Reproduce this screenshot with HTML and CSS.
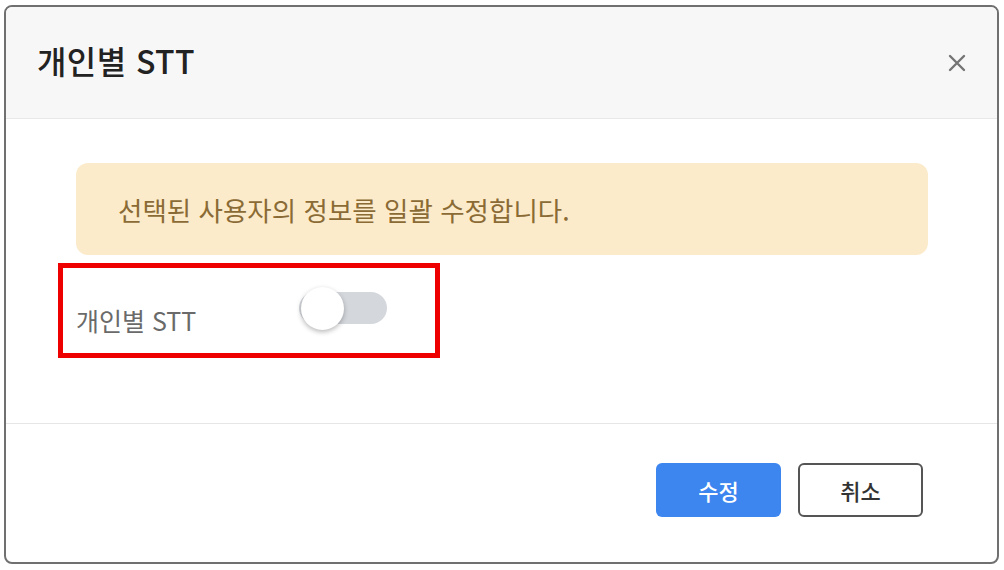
FILE: index.html
```html
<!DOCTYPE html>
<html lang="ko">
<head>
<meta charset="utf-8">
<title>개인별 STT</title>
<link rel="stylesheet" href="styles.css">
</head>
<body>
<div class="dialog">
  <div class="header">
    <h1 class="title">개인별 STT</h1>
    <button class="close" aria-label="닫기">
      <svg width="18" height="18" viewBox="0 0 18 18"><path d="M2 2L16 16M16 2L2 16" stroke="#747474" stroke-width="2.4" stroke-linecap="round"/></svg>
    </button>
  </div>
  <div class="body">
    <div class="alert">선택된 사용자의 정보를 일괄 수정합니다.</div>
    <div class="field">
      <div class="row">
        <span class="label">개인별 STT</span>
        <span class="switch"><span class="knob"></span></span>
      </div>
      <div class="mark"></div>
    </div>
  </div>
  <div class="footer">
    <button class="btn primary">수정</button>
    <button class="btn secondary">취소</button>
  </div>
</div>
</body>
</html>
```
FILE: styles.css
```css
html, body {
  margin: 0;
  padding: 0;
  background: #ffffff;
  font-family: "Noto Sans CJK KR", "Noto Sans", sans-serif;
}
body {
  padding: 5px 5px 6px 4px;
}
.dialog {
  box-sizing: border-box;
  width: 995px;
  height: 559px;
  border: 2px solid #707070;
  border-radius: 8px;
  overflow: hidden;
  display: flex;
  flex-direction: column;
  background: #fff;
}
.header {
  height: 111px;
  flex: none;
  background: #f7f7f7;
  border-bottom: 1px solid #e8e8e8;
  display: flex;
  align-items: center;
  justify-content: space-between;
  padding: 0 31px 0 31px;
}
.title {
  margin: 0;
  font-size: 32px;
  font-weight: 500;
  color: #222;
  line-height: 1;
  margin-top: -6px;
  letter-spacing: 0.4px;
}
.close {
  border: 0;
  background: none;
  padding: 0;
  width: 18px;
  height: 18px;
  display: flex;
  cursor: pointer;
}
.body {
  flex: 1;
  padding: 44px 69px 0 70px;
}
.alert {
  height: 92px;
  box-sizing: border-box;
  background: #fcebcb;
  border-radius: 12px;
  padding: 0 42px;
  display: flex;
  align-items: center;
  color: #8b6b35;
  font-size: 26.5px;
}
.field {
  position: relative;
  margin-top: 13px;
}
.row {
  height: 85px;
  display: flex;
  align-items: center;
}
.label {
  width: 223px;
  padding-top: 18px;
  font-size: 25px;
  color: #6a6a6a;
}
.switch {
  position: relative;
  width: 88px;
  height: 32px;
  border-radius: 16px;
  background: #d4d7dc;
  margin-top: -6px;
}
.knob {
  position: absolute;
  left: 2px;
  top: -5px;
  width: 43px;
  height: 43px;
  border-radius: 50%;
  background: #fff;
  box-shadow: 0 2px 5px rgba(0,0,0,0.28);
}
.mark {
  position: absolute;
  left: -18px;
  top: -5px;
  width: 382px;
  height: 95px;
  box-sizing: border-box;
  border: 5px solid #ee0000;
  pointer-events: none;
}
.footer {
  height: 139px;
  flex: none;
  box-sizing: border-box;
  border-top: 1px solid #e6e6e6;
  display: flex;
  justify-content: flex-end;
  align-items: flex-start;
  gap: 17px;
  padding: 39px 74px 0 0;
}
.btn {
  width: 125px;
  height: 54px;
  border-radius: 6px;
  font-family: inherit;
  font-size: 22px;
  font-weight: 500;
  cursor: pointer;
  box-sizing: border-box;
}
.primary {
  background: #3d86ef;
  color: #fff;
  border: 0;
}
.secondary {
  background: #fff;
  color: #333;
  border: 2px solid #555;
}
```
